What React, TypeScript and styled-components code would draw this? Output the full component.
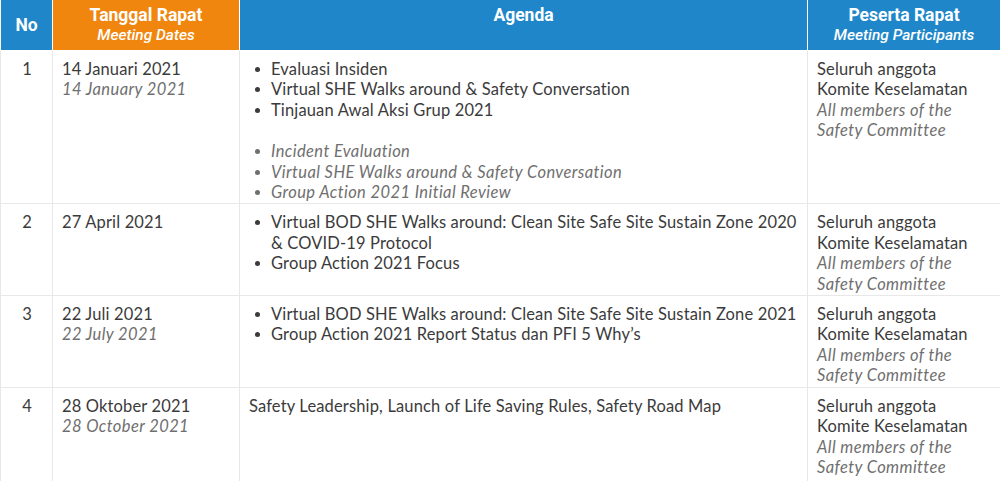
import React from "react";
import styled, { createGlobalStyle } from "styled-components";

const Global = createGlobalStyle`
  html, body { margin: 0; padding: 0; background: #ffffff; }
  body { font-family: Lato, "Open Sans", sans-serif; }
`;

const Table = styled.table`
  width: 1000px;
  border-collapse: collapse;
  table-layout: fixed;
  font-family: Lato, "Open Sans", sans-serif;
  font-size: 16.5px;
  letter-spacing: 0.15px;
  color: #3b3b3b;
`;

const HeadCell = styled.th<{ $orange?: boolean }>`
  background: ${(p) => (p.$orange ? "#f1860f" : "#1f87c9")};
  color: #ffffff;
  height: 45px;
  padding: 5px 4px 0;
  vertical-align: top;
  border: 1px solid #ffffff;
  border-top: none;
  font-family: Roboto, "Open Sans", sans-serif;
  font-weight: 700;
  font-size: 17.5px;
  letter-spacing: 0;
  line-height: 20px;
  text-align: center;
  &:first-child { vertical-align: middle; padding-top: 0; }
`;

const HeadSub = styled.div`
  font-style: italic;
  font-weight: 500;
  font-size: 15.5px;
`;

const BodyRow = styled.tr<{ $last?: boolean }>`
  td { padding-bottom: ${(p) => (p.$last ? "5px" : "1px")}; }
`;

const Cell = styled.td<{ $center?: boolean }>`
  border: 1px solid #e8e8e8;
  vertical-align: top;
  padding: 8px 8px 1px 9px;
  line-height: 20.4px;
  text-align: ${(p) => (p.$center ? "center" : "left")};
`;

const En = styled.div`
  font-style: italic;
  letter-spacing: 0.4px;
  color: #6f6f6f;
`;

const List = styled.ul<{ $en?: boolean; $gap?: boolean }>`
  margin: ${(p) => (p.$gap ? "21px" : "0")} 0 0;
  padding: 0 0 0 6px;
  list-style: none;
  ${(p) => (p.$en ? "font-style: italic; letter-spacing: 0.4px; color: #6f6f6f;" : "")}
`;

const Item = styled.li`
  display: flex;
  align-items: flex-start;
  &::before {
    content: "";
    flex: 0 0 5px;
    height: 5px;
    margin: 8px 11px 0 0;
    border-radius: 50%;
    background: currentColor;
  }
`;

type Row = {
  no: string;
  id: string;
  en?: string;
  agenda: React.ReactNode;
};

const Participants = () => (
  <>
    <div>Seluruh anggota</div>
    <div>Komite Keselamatan</div>
    <En>All members of the</En>
    <En>Safety Committee</En>
  </>
);

const rows: Row[] = [
  {
    no: "1",
    id: "14 Januari 2021",
    en: "14 January 2021",
    agenda: (
      <>
        <List>
          <Item>Evaluasi Insiden</Item>
          <Item>Virtual SHE Walks around &amp; Safety Conversation</Item>
          <Item>Tinjauan Awal Aksi Grup 2021</Item>
        </List>
        <List $en $gap>
          <Item>Incident Evaluation</Item>
          <Item>Virtual SHE Walks around &amp; Safety Conversation</Item>
          <Item>Group Action 2021 Initial Review</Item>
        </List>
      </>
    ),
  },
  {
    no: "2",
    id: "27 April 2021",
    agenda: (
      <List>
        <Item>
          <span>
            Virtual BOD SHE Walks around: Clean Site Safe Site Sustain Zone 2020
            <br />
            &amp; COVID-19 Protocol
          </span>
        </Item>
        <Item>Group Action 2021 Focus</Item>
      </List>
    ),
  },
  {
    no: "3",
    id: "22 Juli 2021",
    en: "22 July 2021",
    agenda: (
      <List>
        <Item>Virtual BOD SHE Walks around: Clean Site Safe Site Sustain Zone 2021</Item>
        <Item>Group Action 2021 Report Status dan PFI 5 Why’s</Item>
      </List>
    ),
  },
  {
    no: "4",
    id: "28 Oktober 2021",
    en: "28 October 2021",
    agenda: <>Safety Leadership, Launch of Life Saving Rules, Safety Road Map</>,
  },
];

export default function App() {
  return (
    <>
      <Global />
      <Table>
        <colgroup>
          <col style={{ width: 52 }} />
          <col style={{ width: 187 }} />
          <col style={{ width: 568 }} />
          <col style={{ width: 193 }} />
        </colgroup>
        <thead>
          <tr>
            <HeadCell>No</HeadCell>
            <HeadCell $orange>
              Tanggal Rapat
              <HeadSub>Meeting Dates</HeadSub>
            </HeadCell>
            <HeadCell>Agenda</HeadCell>
            <HeadCell>
              Peserta Rapat
              <HeadSub>Meeting Participants</HeadSub>
            </HeadCell>
          </tr>
        </thead>
        <tbody>
          {rows.map((r, i) => (
            <BodyRow key={r.no} $last={i === rows.length - 1}>
              <Cell $center>{r.no}</Cell>
              <Cell>
                <div>{r.id}</div>
                {r.en && <En>{r.en}</En>}
              </Cell>
              <Cell>{r.agenda}</Cell>
              <Cell>
                <Participants />
              </Cell>
            </BodyRow>
          ))}
        </tbody>
      </Table>
    </>
  );
}
